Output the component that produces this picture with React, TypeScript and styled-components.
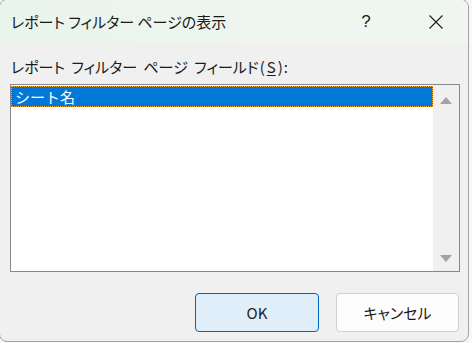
import React from 'react';
import styled, {createGlobalStyle} from 'styled-components';

const GlobalStyle = createGlobalStyle`
  body {
    margin: 0;
    background: #f7f7f7;
    font-family: "Noto Sans CJK JP", "Noto Sans", sans-serif;
  }
`

export default function App() {
    return (
        <>
            <GlobalStyle/>
            <Window>
                <TitleBar>
                    <Title>レポート フィルター ページの表示</Title>
                    <HelpButton>?</HelpButton>
                    <CloseButton>
                        <svg width="14" height="14" viewBox="0 0 14 14">
                            <path d="M0.5 0.5 L13.5 13.5 M13.5 0.5 L0.5 13.5" stroke="#1b1b1b" strokeWidth="1.1"/>
                        </svg>
                    </CloseButton>
                </TitleBar>

                <Body>
                    <FieldLabel>
                        レポート フィルター ページ フィールド<Paren>(</Paren><u>S</u><Paren>)</Paren>:
                    </FieldLabel>

                    <ListBox>
                        <ListItems>
                            <ListItem selected>シート名</ListItem>
                        </ListItems>
                        <ScrollBar>
                            <Arrow up/>
                            <Arrow/>
                        </ScrollBar>
                    </ListBox>

                    <ButtonRow>
                        <DialogButton primary>OK</DialogButton>
                        <DialogButton>キャンセル</DialogButton>
                    </ButtonRow>
                </Body>
            </Window>
        </>
    );
}

const Window = styled.div`
  box-sizing: border-box;
  width: 470px;
  height: 343px;
  margin: -1px 0 0 -1px;
  background: #f0f0f0;
  border: 1px solid #a3a3a3;
  border-radius: 8px;
  overflow: hidden;
  display: flex;
  flex-direction: column;
`
const TitleBar = styled.div`
  height: 43px;
  flex-shrink: 0;
  display: flex;
  align-items: center;
  padding: 0 9px 0 11px;
  background: linear-gradient(90deg, #e9f4ec 0%, #eef6ef 60%, #f0f6ef 100%);
`
const Title = styled.div`
  flex: 1;
  font-size: 15px;
  color: #1b1b1b;
  font-feature-settings: "palt";
`
const HelpButton = styled.div`
  width: 46px;
  margin-right: 24px;
  text-align: center;
  font-family: "Liberation Sans", sans-serif;
  font-size: 17px;
  color: #1b1b1b;
`
const CloseButton = styled.div`
  width: 46px;
  height: 43px;
  display: flex;
  align-items: center;
  justify-content: center;
`
const Body = styled.div`
  flex: 1;
  display: flex;
  flex-direction: column;
  padding: 13px 8px 0 10px;
`
const FieldLabel = styled.div`
  margin-left: 1px;
  height: 22px;
  line-height: 22px;
  margin-bottom: 6px;
  font-size: 15px;
  color: #1b1b1b;
  font-feature-settings: "palt";
  word-spacing: 3px;

  u {
    text-underline-offset: 2px;
    padding: 0 1px;
  }
`
const Paren = styled.span`
  padding: 0 1px;
`
const ListBox = styled.div`
  box-sizing: border-box;
  height: 188px;
  display: flex;
  background: #ffffff;
  border: 1px solid #828790;
`
const ListItems = styled.div`
  flex: 1;
  padding-top: 1px;
`
const ListItem = styled.div<{ selected?: boolean }>`
  box-sizing: border-box;
  height: 21px;
  line-height: 19px;
  padding-left: 3px;
  font-size: 15px;
  color: ${p => p.selected ? '#ffffff' : '#1b1b1b'};
  background: ${p => p.selected ? '#0078d7' : 'transparent'};
  border: 1px dotted ${p => p.selected ? '#f0a030' : 'transparent'};
`
const ScrollBar = styled.div`
  width: 26px;
  background: #f0f0f0;
  display: flex;
  flex-direction: column;
  align-items: center;
  justify-content: space-between;
  padding: 12px 0 9px;
`
const Arrow = styled.div<{ up?: boolean }>`
  width: 0;
  height: 0;
  border-left: 6px solid transparent;
  border-right: 6px solid transparent;
  ${p => p.up ? 'border-bottom: 7px solid #a3a3a3;' : 'border-top: 7px solid #a3a3a3;'}
`
const ButtonRow = styled.div`
  display: flex;
  justify-content: flex-end;
  gap: 17px;
  margin-top: 21px;
  padding-right: 1px;
`
const DialogButton = styled.div<{ primary?: boolean }>`
  box-sizing: border-box;
  width: ${p => p.primary ? '124px' : '123px'};
  height: 39px;
  display: flex;
  align-items: center;
  justify-content: center;
  font-size: 15px;
  color: #1b1b1b;
  border-radius: 4px;
  background: ${p => p.primary ? '#e0eef9' : '#fdfdfd'};
  border: 1px solid ${p => p.primary ? '#0067c0' : '#d0d0d0'};
  font-feature-settings: "palt";
`
